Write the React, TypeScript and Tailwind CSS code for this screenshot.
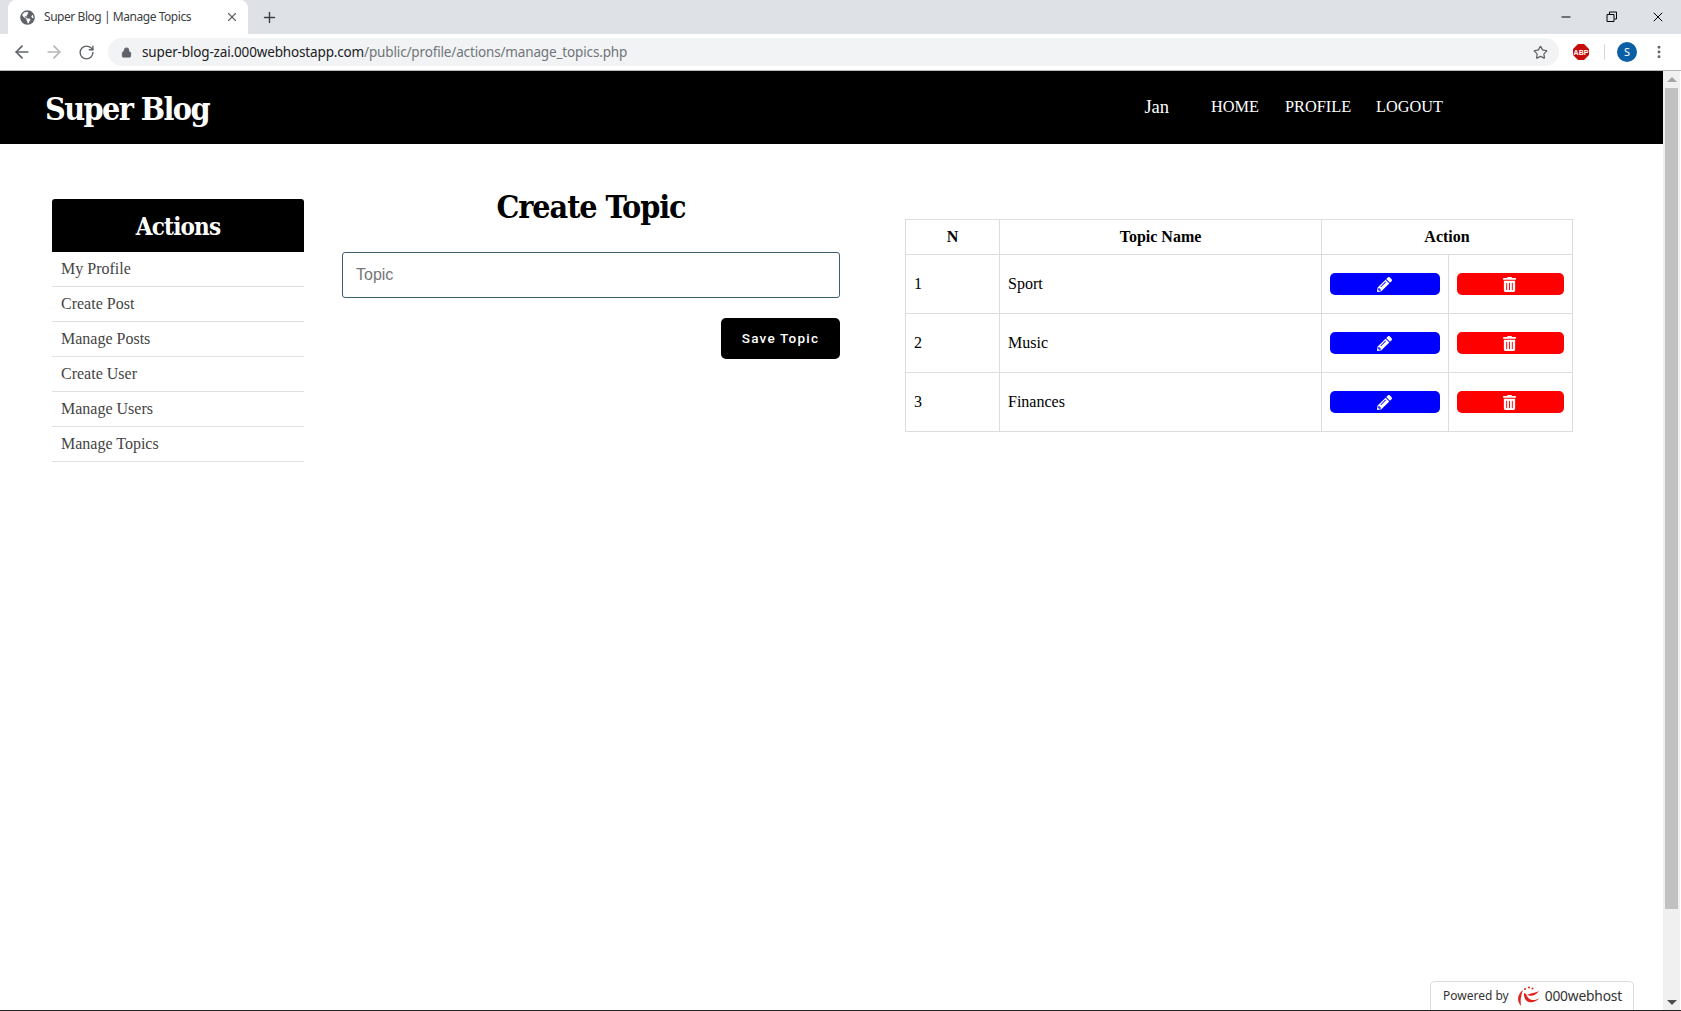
import React from "react";
import {ArrowLeft, ArrowRight, EllipsisVertical, Lock, Minus, Plus, RotateCw, Star, X} from "lucide-react";
import {FaGlobeAmericas, FaPencilAlt, FaTrashAlt} from "react-icons/fa";

const sidebarItems = ["My Profile", "Create Post", "Manage Posts", "Create User", "Manage Users", "Manage Topics"];
const topics = ["Sport", "Music", "Finances"];

const Chrome: React.FC = () => {
	return (
		<div className="font-['Noto_Sans',sans-serif]">
			{/* Tab strip */}
			<div className="flex h-[34px] bg-[#dee1e6]">
				<div className="ml-2 mt-0 flex h-[34px] w-[240px] items-center rounded-t-lg bg-white pl-[12px] pr-[9px]">
					<FaGlobeAmericas className="text-[15px] text-[#5f6368]" />
					<span className="ml-[9px] flex-1 text-[12px] tracking-[-0.45px] text-[#3c4043]">Super Blog | Manage Topics</span>
					<X size={14} className="text-[#5f6368]" />
				</div>
				<div className="ml-[13px] flex items-center">
					<Plus size={17} strokeWidth={2} className="text-[#3c4043]" />
				</div>
				<div className="ml-auto flex items-center">
					<Minus size={14} strokeWidth={1.7} className="mr-[33px] text-black" />
					<svg width="12" height="12" viewBox="0 0 12 12" fill="none" stroke="black" className="mr-[32px]">
						<path d="M3.5 3V1h7v7H8.5M1 3.5h7v7H1z" />
					</svg>
					<X size={16} strokeWidth={1.5} className="mr-[15px] text-black" />
				</div>
			</div>
			{/* Toolbar */}
			<div className="flex h-[37px] items-center border-b border-[#b6b8ba] bg-white">
				<ArrowLeft size={20} className="ml-[12px] text-[#5f6368]" />
				<ArrowRight size={20} className="ml-[12px] text-[#b4b6b9]" />
				<RotateCw size={17} className="ml-[14px] text-[#5f6368]" />
				<div className="ml-[13px] flex h-[28px] w-[1451px] items-center rounded-full bg-[#f1f3f4] pl-[13px]">
					<Lock size={11} fill="#5f6368" className="text-[#5f6368]" />
					<span className="ml-[10px] text-[13.5px] tracking-[-0.15px] text-[#202124]">
						super-blog-zai.000webhostapp.com<span className="text-[#70757a]">/public/profile/actions/manage_topics.php</span>
					</span>
					<Star size={15} className="ml-auto mr-[11px] text-[#5f6368]" />
				</div>
				<svg width="16" height="16" viewBox="0 0 16 16" className="ml-[14px]">
					<polygon points="5,0 11,0 16,5 16,11 11,16 5,16 0,11 0,5" fill="#c70d0c" />
					<text x="8" y="10.5" textAnchor="middle" fontSize="7" fontWeight="700" fill="white" fontFamily="Liberation Sans">ABP</text>
				</svg>
				<div className="ml-[15px] h-4 w-px bg-[#d5d7da]" />
				<div className="ml-[12px] flex size-[20px] items-center justify-center rounded-full bg-[#0b5fa5] text-[11px] text-white">S</div>
				<EllipsisVertical size={16} strokeWidth={2.4} className="ml-[14px] text-[#5f6368]" />
			</div>
		</div>
	);
};

const Sidebar: React.FC = () => {
	return (
		<div className="w-[252px] shrink-0">
			<h2 className="flex h-[53px] items-center justify-center rounded-t-[3px] bg-black pt-[2px] font-['DejaVu_Serif_Condensed','DejaVu_Serif',serif] text-[24px] font-bold tracking-[-0.85px] text-white">Actions</h2>
			{sidebarItems.map((item) => (
				<a key={item} className="flex h-[35px] items-center border-b border-[#e0e0e0] pl-[9px] font-['Liberation_Serif',serif] text-[16px] text-[#444]">
					{item}
				</a>
			))}
		</div>
	);
};

const TopicForm: React.FC = () => {
	return (
		<div className="ml-[38px] w-[498px] shrink-0">
			<h1 className="-mt-[12px] h-[65px] text-center font-['DejaVu_Serif_Condensed','DejaVu_Serif',serif] text-[32px] font-bold leading-[40px] tracking-[-1.1px] text-black">Create Topic</h1>
			<div className="flex h-[46px] items-center rounded-[3px] border border-[#3d6070] px-[13px] font-['Liberation_Sans',sans-serif] text-[16px] text-[#757575]">Topic</div>
			<div className="mt-[20px] flex justify-end">
				<button className="h-[41px] w-[119px] rounded-[5px] bg-black font-['Roboto',sans-serif] text-[13.5px] font-medium tracking-[1.2px] text-white">Save Topic</button>
			</div>
		</div>
	);
};

const TopicTable: React.FC = () => {
	return (
		<div className="ml-[65px] pt-[20px]">
			<table className="w-[667px] table-fixed border-collapse border border-[#ddd] font-['Liberation_Serif',serif] text-[16px] text-black">
				<colgroup>
					<col className="w-[94px]" />
					<col className="w-[322px]" />
					<col className="w-[127px]" />
					<col className="w-[124px]" />
				</colgroup>
				<thead>
					<tr className="h-[35px]">
						<th className="border border-[#ddd] font-bold">N</th>
						<th className="border border-[#ddd] font-bold">Topic Name</th>
						<th colSpan={2} className="border border-[#ddd] font-bold">Action</th>
					</tr>
				</thead>
				<tbody>
					{topics.map((topic, index) => (
						<tr key={topic} className="h-[59px]">
							<td className="border border-[#ddd] pl-[8px]">{index + 1}</td>
							<td className="border border-[#ddd] pl-[8px]">{topic}</td>
							<td className="border border-[#ddd] px-[8px]">
								<a className="flex h-[22px] items-center justify-center rounded-[5px] bg-[#0000ff] text-[15px] text-white">
									<FaPencilAlt className="-ml-[2px]" />
								</a>
							</td>
							<td className="border border-[#ddd] pl-[8px] pr-[8px]">
								<a className="flex h-[22px] items-center justify-center rounded-[5px] bg-[#ff0000] text-[15px] text-white">
									<FaTrashAlt className="-ml-[2px]" />
								</a>
							</td>
						</tr>
					))}
				</tbody>
			</table>
		</div>
	);
};

const Scrollbar: React.FC = () => {
	return (
		<div className="mr-px flex w-[17px] shrink-0 flex-col items-center bg-[#f0f0f0]">
			<div className="flex h-[17px] items-center justify-center">
				<div className="size-0 border-x-[5px] border-b-[5px] border-x-transparent border-b-[#a3a3a3]" />
			</div>
			<div className="h-[821px] w-[13px] bg-[#c1c1c1]" />
			<div className="mt-auto flex h-[17px] items-center justify-center">
				<div className="size-0 border-x-[5px] border-t-[5px] border-x-transparent border-t-[#505050]" />
			</div>
		</div>
	);
};

const App: React.FC = () => {
	return (
		<div className="relative flex h-[1011px] w-[1681px] flex-col overflow-hidden bg-white">
			<Chrome />
			<div className="flex min-h-0 flex-1">
				<div className="flex-1">
					{/* Header */}
					<header className="flex h-[73px] items-center bg-black text-white">
						<div className="ml-[45px] pt-[2px] font-['DejaVu_Serif_Condensed','DejaVu_Serif',serif] text-[32px] font-bold tracking-[-1.6px]">Super Blog</div>
						<nav className="ml-auto mr-[220px] flex items-center font-['Liberation_Serif',serif] text-[16.3px]">
							<span className="mr-[42px] text-[18.5px]">Jan</span>
							<a className="mr-[26px]">HOME</a>
							<a className="mr-[25px]">PROFILE</a>
							<a>LOGOUT</a>
						</nav>
					</header>
					{/* Content */}
					<main className="flex pl-[52px] pt-[55px]">
						<Sidebar />
						<TopicForm />
						<TopicTable />
					</main>
				</div>
				<Scrollbar />
			</div>
			{/* Hosting badge */}
			<div className="absolute bottom-px left-[1430px] flex h-[29px] w-[204px] items-center rounded-t-[5px] border border-b-0 border-[#dcdcdc] bg-white pl-[12px] font-['Noto_Sans',sans-serif] text-[#333]">
				<span className="text-[12px]">Powered by</span>
				<svg width="24" height="20" viewBox="0 0 24 20" fill="#e0201c" className="ml-[7px]">
					<path d="M7 4C2 8 0 14 5 20C4 14 5 9 7 4z" />
					<path d="M8 7C7 14 14 21 24 12C17 16 12 14 10 8z" />
					<path d="M11 9C16 11 20 9 23 5C19 7 15 7 11 9z" />
					<circle cx="9" cy="3" r="1" />
					<circle cx="13" cy="1.5" r="1" />
					<circle cx="16.5" cy="2.5" r="1" />
				</svg>
				<span className="ml-[5px] text-[13.8px] tracking-[-0.2px]">000webhost</span>
			</div>
			<div className="absolute bottom-0 left-0 h-px w-full bg-[#222]" />
		</div>
	);
};

export default App;
